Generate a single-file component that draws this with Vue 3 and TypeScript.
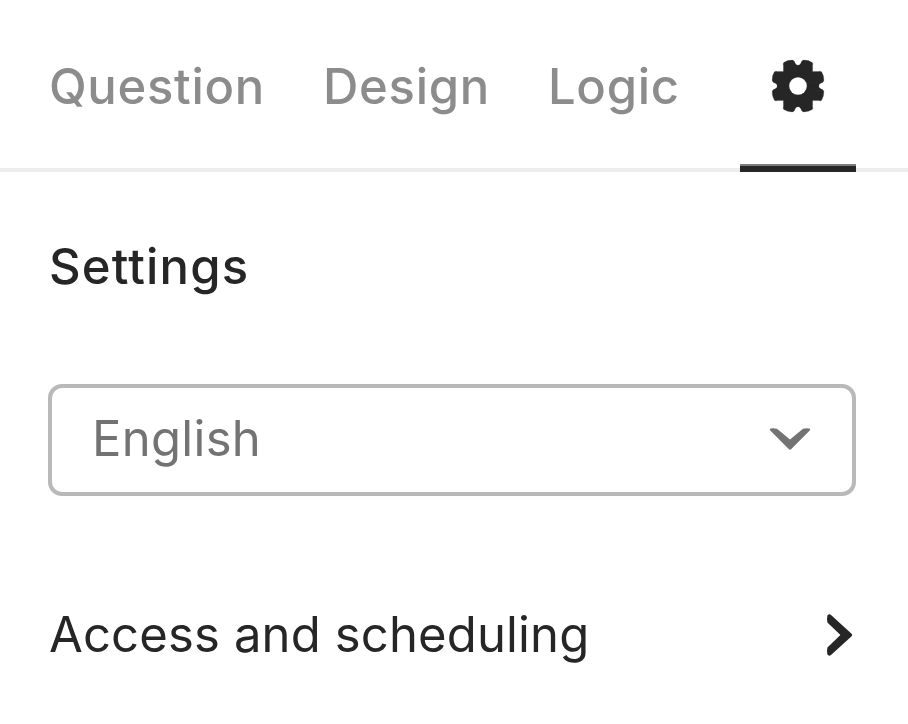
<script setup lang="ts">
const tabs: string[] = ['Question', 'Design', 'Logic']
</script>

<template>
  <main class="panel">
    <nav class="tabs">
      <a v-for="tab in tabs" :key="tab" class="tab">{{ tab }}</a>
      <a class="tab active">
        <svg class="gear" width="56" height="56" viewBox="-28 -28 56 56">
          <defs>
            <path id="gear-quarter" d="M0 0V-20.8Q2-20.8 2.8-22.8Q3.4-25.4 5.5-25.9Q10.5-26 14.2-23.6Q15.3-22.6 14.6-20.5V-14.6H20.5Q22.6-15.3 23.6-14.2Q26-10.5 25.9-5.5Q25.4-3.4 22.8-2.8Q20.8-2 20.8 0Z" />
            <mask id="gear-hole">
              <rect x="-28" y="-28" width="56" height="56" fill="white" />
              <circle r="8.8" fill="black" />
            </mask>
          </defs>
          <g fill="#262627" stroke="#262627" stroke-width=".2" mask="url(#gear-hole)">
            <use href="#gear-quarter" />
            <use href="#gear-quarter" transform="rotate(90)" />
            <use href="#gear-quarter" transform="rotate(180)" />
            <use href="#gear-quarter" transform="rotate(270)" />
          </g>
        </svg>
      </a>
    </nav>
    <section class="content">
      <h1>Settings</h1>
      <button class="select">
        <span>English</span>
        <svg width="42" height="24" viewBox="0 0 42 24">
          <path fill="#737373" d="M1.5 1.6Q4.5.8 8 1.8L21 12.6L34 1.8Q37.5.8 40.5 1.6Q42 2.3 40.5 3.8L22.3 22Q21 23.3 19.7 22L1.5 3.8Q0 2.3 1.5 1.6Z" />
        </svg>
      </button>
      <div class="row">
        <span>Access and scheduling</span>
        <svg width="28" height="44" viewBox="0 0 28 44">
          <path fill="#262627" d="M1.4 2.4Q3 .4 5 2L25.6 20.8Q27 22 25.6 23.2L5 42Q3 43.6 1.4 41.6Q.6 38 1.4 34.4L14.4 22L1.4 9.6Q.6 6 1.4 2.4Z" />
        </svg>
      </div>
    </section>
  </main>
</template>

<style scoped>
.panel { width: 908px; height: 724px; overflow: hidden; background: #fff; color: #262627; font: 49px/60px Inter, sans-serif; letter-spacing: .2px; }
.tabs { display: flex; height: 172px; box-sizing: border-box; padding-left: 49px; box-shadow: inset 0 -4px #ededee; }
.tab { height: 172px; color: #8c8c8c; padding-top: 57px; box-sizing: border-box; margin-right: 58px; font-weight: 500; letter-spacing: .7px; }
.tab.active { width: 116px; margin-left: auto; margin-right: 52px; border-bottom: 6px solid #262627; box-shadow: inset 0 -2px #7d7d7d; padding-top: 58px; display: flex; justify-content: center; }
.content { padding: 65px 52px 0 48px; }
h1 { font: 500 49px/60px Inter, sans-serif; margin: 0; padding-left: 1px; letter-spacing: 1.15px; }
.select { width: 100%; height: 112px; margin-top: 87px; border: 4px solid #b9b9b9; border-radius: 14px; padding: 0 41px 2px 40px; background: #fff; color: #737373; font: inherit; letter-spacing: .3px; display: flex; align-items: center; justify-content: space-between; }
.row { margin-top: 109px; padding: 0 2px 0 1px; display: flex; align-items: center; justify-content: space-between; letter-spacing: .15px; }
</style>
